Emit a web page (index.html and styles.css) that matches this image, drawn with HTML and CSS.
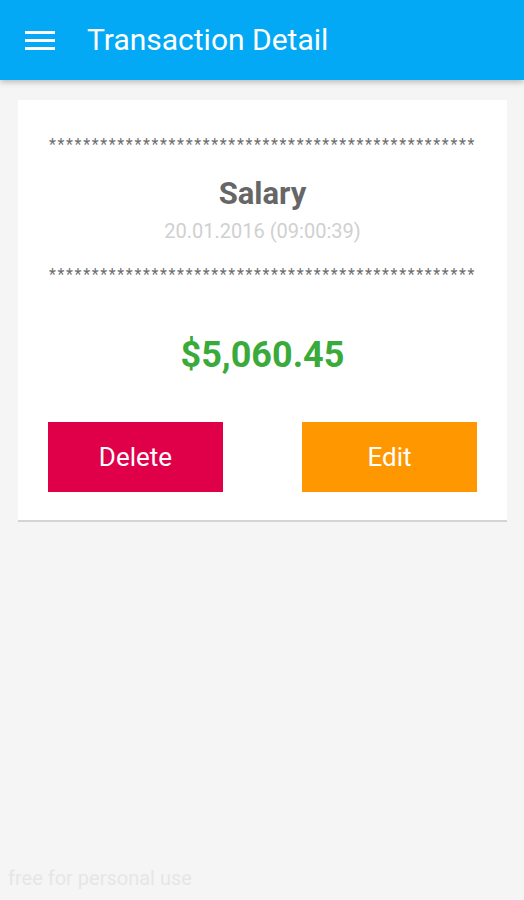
FILE: index.html
```html
<!DOCTYPE html>
<html>
<head>
	<meta charset="utf8">
	<title>Transaction Detail</title>
	<link rel="stylesheet" href="styles.css">
</head>
<body>
	<div id="topo">
		<svg class="menu" width="30" height="20" viewBox="0 0 30 20">
			<rect x="0" y="0" width="30" height="3" fill="#fff"/>
			<rect x="0" y="8" width="30" height="3" fill="#fff"/>
			<rect x="0" y="16" width="30" height="3" fill="#fff"/>
		</svg>
		<h1>Transaction Detail</h1>
	</div>
	<div id="pagina">
		<div id="cartao">
			<div class="estrelas">**************************************************</div>
			<h2>Salary</h2>
			<div class="data">20.01.2016 (09:00:39)</div>
			<div class="estrelas">**************************************************</div>
			<div class="valor">$5,060.45</div>
			<div class="botoes">
				<button class="apagar">Delete</button>
				<button class="editar">Edit</button>
			</div>
		</div>
	</div>
	<span id="marca">free for personal use</span>
</body>
</html>
```
FILE: styles.css
```css
html, body{
	margin: 0;
	height: 100%;
}
body{
	font-family: Roboto, "Liberation Sans", sans-serif;
	background-color: #f5f5f5;
	position: relative;
	overflow: hidden;
}
#topo{
	height: 80px;
	background-color: #03a9f4;
	display: flex;
	align-items: center;
	padding-left: 25px;
	box-shadow: 0 2px 6px rgba(0, 0, 0, 0.25);
	position: relative;
	z-index: 1;
}
.menu{
	display: block;
	margin-top: 2px;
}
h1{
	margin: 0 0 0 32px;
	color: #fff;
	font-size: 30px;
	font-weight: normal;
	line-height: 36px;
}
#pagina{
	padding: 20px 17px 0 18px;
}
#cartao{
	background-color: #fff;
	border-bottom: 2px solid #d4d4d4;
	padding: 35px 30px 28px 30px;
	text-align: center;
}
.estrelas{
	font-size: 16px;
	line-height: 20px;
	letter-spacing: 1.65px;
	color: #6e6e6e;
	overflow: hidden;
	white-space: nowrap;
}
h2{
	margin: 21px 0 0 0;
	font-size: 31px;
	line-height: 36px;
	font-weight: bold;
	color: #666;
}
.data{
	margin: 7px 0 22px 0;
	font-size: 20px;
	line-height: 24px;
	color: #d0d0d0;
}
.valor{
	margin-top: 49px;
	font-size: 36px;
	line-height: 42px;
	font-weight: bold;
	color: #3aaa3a;
}
.botoes{
	margin-top: 46px;
	display: flex;
	justify-content: space-between;
}
button{
	width: 175px;
	height: 70px;
	border: none;
	font-family: Roboto, "Liberation Sans", sans-serif;
	font-size: 26px;
	color: #fff;
	padding: 0;
}
.apagar{
	background-color: #df0049;
}
.editar{
	background-color: #ff9800;
}
#marca{
	position: absolute;
	left: 8px;
	top: 866px;
	font-size: 20px;
	line-height: 24px;
	color: #e6e6e6;
}
```
